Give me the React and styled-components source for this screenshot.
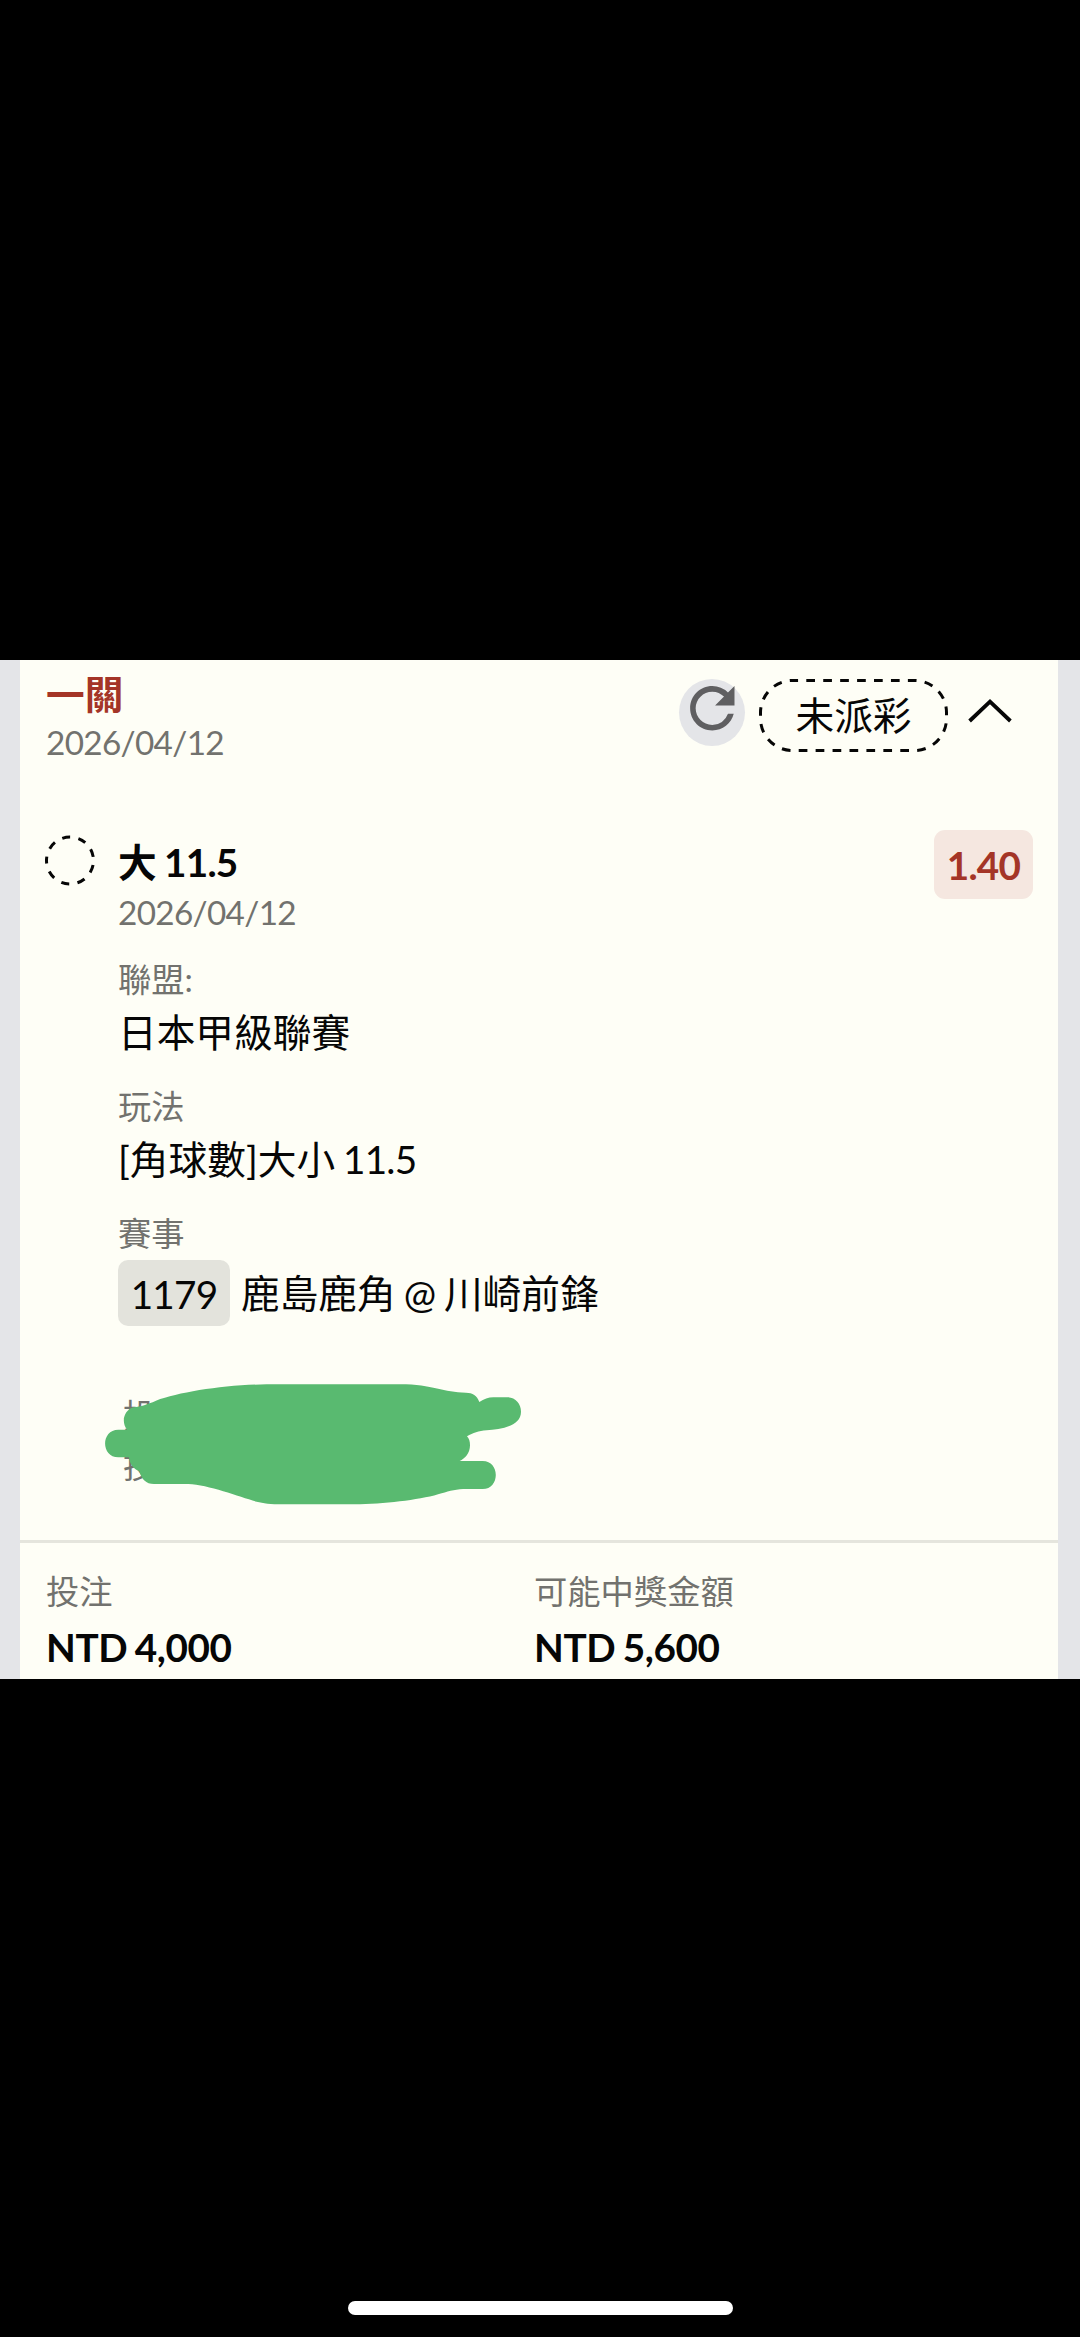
import styled, { createGlobalStyle } from "styled-components";
import { MdRefresh } from "react-icons/md";

const GlobalStyle = createGlobalStyle`
  body {
    margin: 0;
    background-color: #000000;
    font-family: Lato, "Noto Sans CJK TC", sans-serif;
  }
  * {
    box-sizing: border-box;
  }
`;

const Screen = styled.div`
  display: flex;
  flex-direction: column;
  align-items: center;
  height: 2337px;
  padding-top: 660px;
`;

const Page = styled.main`
  width: 1080px;
  height: 1019px;
  padding: 0 22px 0 20px;
  background-color: #e4e5e8;
  overflow: hidden;
`;

const Ticket = styled.article`
  height: 100%;
  background-color: #fefef6;
`;

const Header = styled.header`
  display: flex;
  height: 170px;
  padding: 9px 46px 0 26px;
`;

const HeaderText = styled.div`
  flex: 1;
  padding-top: 1px;
`;

const Title = styled.div`
  font-size: 38.7px;
  font-weight: ${({ $bold }) => ($bold ? 700 : 400)};
  line-height: 48px;
  color: ${({ $red }) => ($red ? "#a43527" : "#060606")};
  white-space: pre;
  word-spacing: -2px;
`;

const Muted = styled.div`
  font-size: 33.3px;
  line-height: 48px;
  color: #72726e;
  white-space: nowrap;
`;

/* numbers are set a little tighter than the chinese text */
const Tight = styled.span`
  letter-spacing: -0.02em;
`;

const RefreshButton = styled.button`
  width: 66px;
  height: 67px;
  margin: 10px 14px 0 0;
  padding: 0;
  border: none;
  border-radius: 50%;
  background-color: #e4e5e8;
  color: #5f5f61;
`;

const RefreshIcon = styled(MdRefresh)`
  display: block;
  width: 66.6px;
  height: 66.6px;
  margin-top: -8px;
`;

const Status = styled.div`
  position: relative;
  width: 189px;
  height: 73px;
  margin: 10px 20px 0 0;
  font-size: 38.7px;
  line-height: 72px;
  text-align: center;
  color: #060606;
`;

const StatusOutline = styled.svg`
  position: absolute;
  inset: 0;
`;

const Chevron = styled.svg`
  margin-top: 29px;
`;

const Bet = styled.section`
  display: flex;
  height: 710px;
  padding: 0 25px 0 25px;
`;

const PendingIcon = styled.svg`
  margin: 5px 23px 0 0;
`;

const BetBody = styled.div`
  flex: 1;
  padding-top: 8px;
`;

const BetDate = styled(Muted)`
  margin-top: 2px;
`;

const Field = styled.div`
  margin-top: ${({ $gap }) => $gap}px;
`;

const Value = styled(Title)`
  margin-top: 5px;
`;

const Match = styled.div`
  display: flex;
  align-items: center;
  gap: 11px;
  margin-top: 3px;
`;

const MatchNumber = styled.span`
  width: 112px;
  height: 66px;
  border-radius: 10px;
  background-color: #e3e3dc;
  color: #060606;
  font-size: 38.7px;
  line-height: 69px;
  text-align: center;
`;

const Odds = styled.div`
  width: 99px;
  height: 69px;
  border-radius: 11px;
  background-color: #f5e7e0;
  color: #a43527;
  font-size: 38.7px;
  font-weight: 700;
  line-height: 71px;
  text-align: center;
`;

const Receipt = styled.div`
  position: relative;
  margin-top: 64px;
  padding-left: 5px;
`;

const ReceiptLine = styled(Muted)`
  line-height: 50px;
`;

const Scribble = styled.svg`
  position: absolute;
  top: -30px;
  left: -38px;
`;

const Footer = styled.footer`
  display: grid;
  grid-template-columns: 488px 1fr;
  padding: 24px 26px 0;
  border-top: 3px solid #e5e5dd;
`;

const Amount = styled(Title)`
  margin-top: 8px;
  letter-spacing: -0.4px;
  word-spacing: -1.5px;
`;

const HomeBar = styled.div`
  width: 385px;
  height: 14px;
  margin-top: 622px;
  border-radius: 7px;
  background-color: #ffffff;
`;

const totals = [
  { label: "投注", amount: "NTD 4,000" },
  { label: "可能中獎金額", amount: "NTD 5,600" },
];

export default function App() {
  return (
    <>
      <GlobalStyle />
      <Screen>
        <Page>
          <Ticket>
            <Header>
              <HeaderText>
                <Title $bold $red>
                  一關
                </Title>
                <Muted>
                  <Tight>2026/04/12</Tight>
                </Muted>
              </HeaderText>
              <RefreshButton aria-label="refresh">
                <RefreshIcon />
              </RefreshButton>
              <Status>
                <StatusOutline width="189" height="73" viewBox="0 0 189 73">
                  <rect
                    x="1.5"
                    y="1.5"
                    width="186"
                    height="70"
                    rx="32"
                    fill="none"
                    stroke="#060606"
                    strokeWidth="3"
                    strokeDasharray="8.7 8.23"
                    strokeDashoffset="-13.8"
                  />
                </StatusOutline>
                未派彩
              </Status>
              <Chevron width="44" height="26" viewBox="0 0 44 26">
                <path
                  d="M1.6 23 L22 3.6 L42.4 23"
                  fill="none"
                  stroke="#060606"
                  strokeWidth="3.8"
                />
              </Chevron>
            </Header>

            <Bet>
              <PendingIcon width="50" height="51" viewBox="0 0 50 51">
                <circle
                  cx="25"
                  cy="25.5"
                  r="23.5"
                  fill="none"
                  stroke="#060606"
                  strokeWidth="3"
                  strokeDasharray="8 8.406"
                  strokeDashoffset="4"
                  transform="rotate(180 25 25.5)"
                />
              </PendingIcon>
              <BetBody>
                <Title $bold>
                  大 <Tight>11.5</Tight>
                </Title>
                <BetDate>
                  <Tight>2026/04/12</Tight>
                </BetDate>
                <Field $gap={19}>
                  <Muted>聯盟:</Muted>
                  <Value>日本甲級聯賽</Value>
                </Field>
                <Field $gap={26}>
                  <Muted>玩法</Muted>
                  <Value>
                    [角球數]大小 <Tight>11.5</Tight>
                  </Value>
                </Field>
                <Field $gap={26}>
                  <Muted>賽事</Muted>
                  <Match>
                    <MatchNumber>
                      <Tight>1179</Tight>
                    </MatchNumber>
                    <Title>鹿島鹿角 @ 川崎前鋒</Title>
                  </Match>
                </Field>
                <Receipt>
                  <ReceiptLine>投</ReceiptLine>
                  <ReceiptLine>投</ReceiptLine>
                  <Scribble width="480" height="180" viewBox="0 0 1440 540">
                    <path
                      d="M135 209H115C62 209 62 292 115 292H147C149 312 160 328 178 333C184 358 198 372 222 372H325C385 374 480 411 530 425C550 430 570 433 610 433H840C930 430 1030 418 1085 400C1110 392 1130 387 1160 387H1208C1260 387 1261 303 1208 303H1139C1155 296 1170 280 1170 256C1170 244 1167 235 1161 229C1180 219 1195 213 1220 211C1260 207 1323 200 1323 155C1323 132 1306 112 1282 112H1240C1225 112 1212 117 1198 126C1191 106 1178 98 1158 98C1090 98 1060 73 960 73H560C430 75 300 96 228 122C200 134 185 139 160 142C133 150 122 185 141 209Z"
                      fill="#59ba70"
                    />
                  </Scribble>
                </Receipt>
              </BetBody>
              <Odds>
                <Tight>1.40</Tight>
              </Odds>
            </Bet>

            <Footer>
              {totals.map(({ label, amount }) => (
                <div key={label}>
                  <Muted>{label}</Muted>
                  <Amount $bold>{amount}</Amount>
                </div>
              ))}
            </Footer>
          </Ticket>
        </Page>
        <HomeBar />
      </Screen>
    </>
  );
}
